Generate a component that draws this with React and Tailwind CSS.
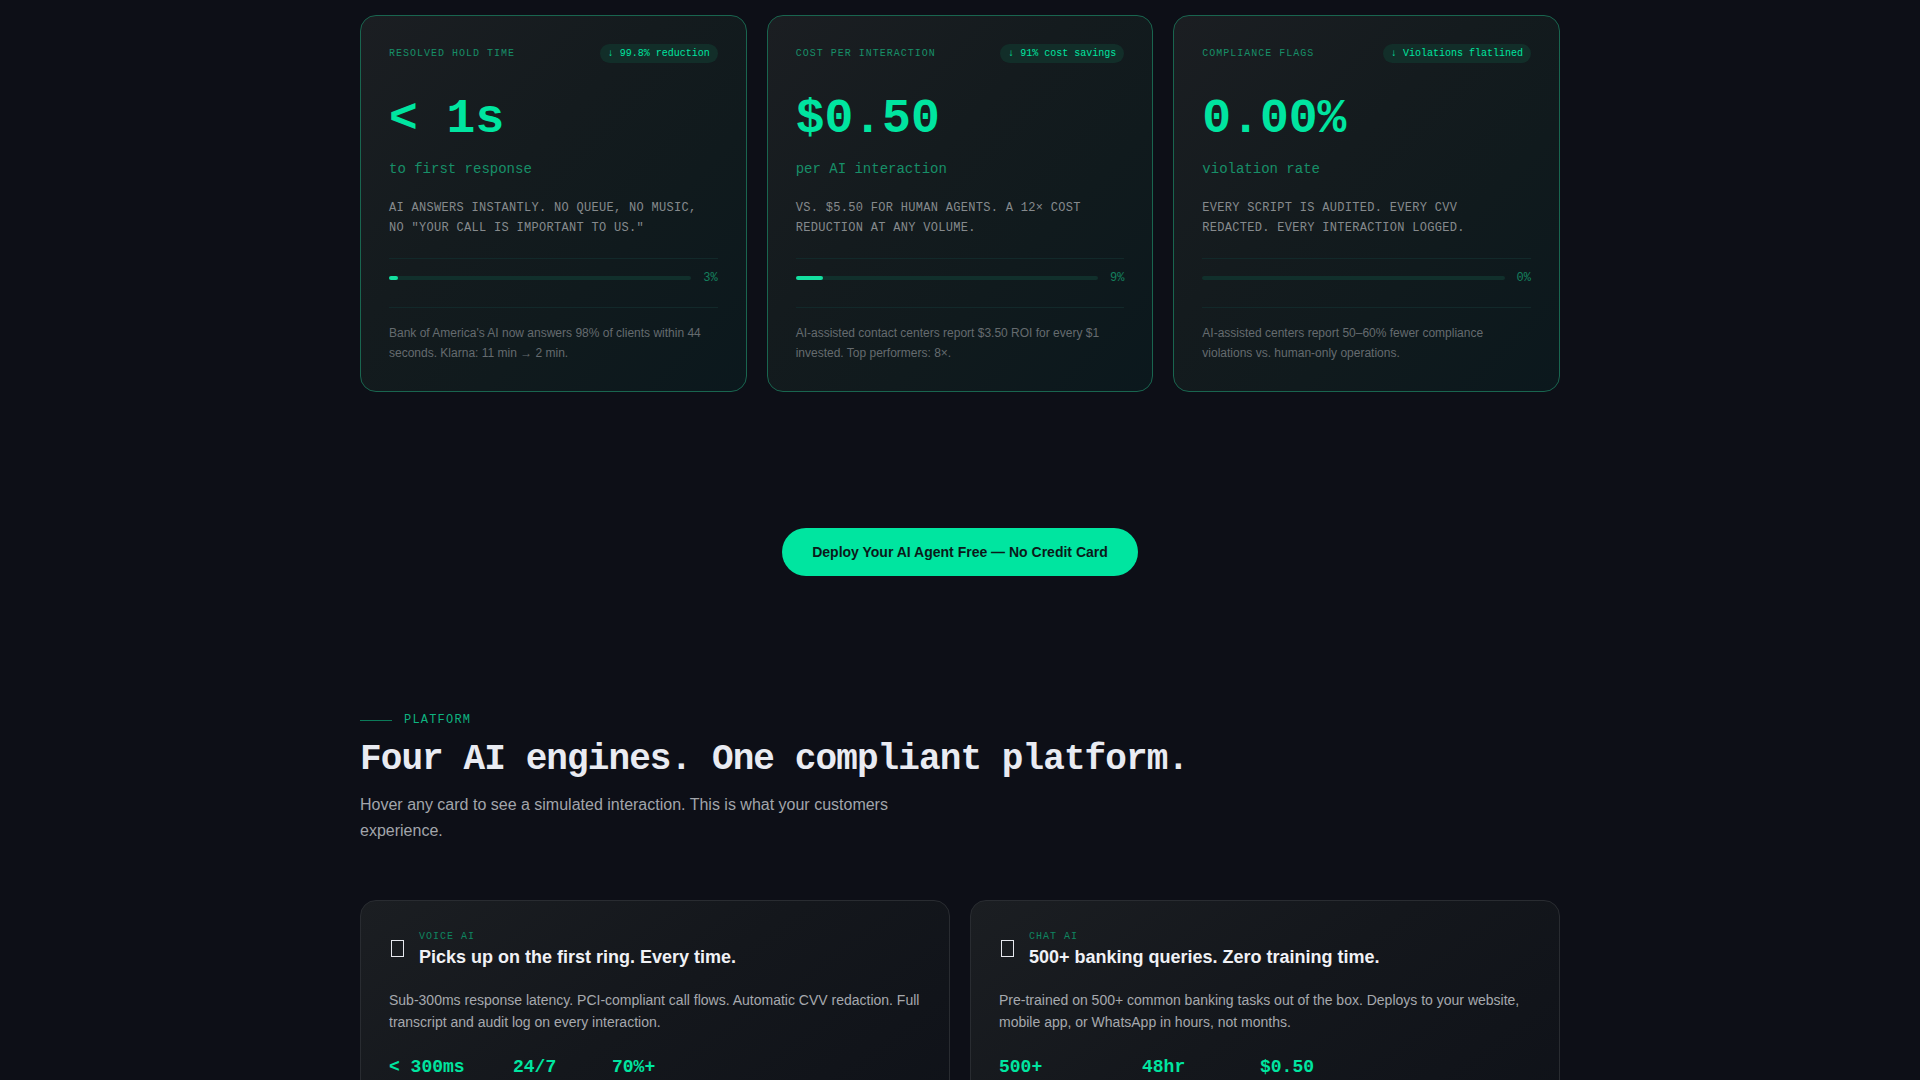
const SANS = 'font-["Liberation_Sans",Arial,sans-serif]';
const MONO = 'font-["Liberation_Mono","Courier_New",monospace]';

const metrics = [
  {
    label: "Resolved hold time",
    badge: "↓ 99.8% reduction",
    value: "< 1s",
    unit: "to first response",
    text: "AI answers instantly. No queue, no music, no \"your call is important to us.\"",
    percent: 3,
    note: "Bank of America's AI now answers 98% of clients within 44 seconds. Klarna: 11 min → 2 min.",
  },
  {
    label: "Cost per interaction",
    badge: "↓ 91% cost savings",
    value: "$0.50",
    unit: "per AI interaction",
    text: "vs. $5.50 for human agents. A 12× cost reduction at any volume.",
    percent: 9,
    note: "AI-assisted contact centers report $3.50 ROI for every $1 invested. Top performers: 8×.",
  },
  {
    label: "Compliance flags",
    badge: "↓ Violations flatlined",
    value: "0.00%",
    unit: "violation rate",
    text: "Every script is audited. Every CVV redacted. Every interaction logged.",
    percent: 0,
    note: "AI-assisted centers report 50–60% fewer compliance violations vs. human-only operations.",
  },
];

const engines = [
  {
    label: "Voice AI",
    title: "Picks up on the first ring. Every time.",
    text: "Sub-300ms response latency. PCI-compliant call flows. Automatic CVV redaction. Full transcript and audit log on every interaction.",
    stats: ["< 300ms", "24/7", "70%+"],
    columns: "grid-cols-[124px_99px_auto]",
  },
  {
    label: "Chat AI",
    title: "500+ banking queries. Zero training time.",
    text: "Pre-trained on 500+ common banking tasks out of the box. Deploys to your website, mobile app, or WhatsApp in hours, not months.",
    stats: ["500+", "48hr", "$0.50"],
    columns: "grid-cols-[143px_118px_auto]",
  },
];

function MetricCard({ metric }) {
  return (
    <article className="rounded-2xl border border-[#19654f] bg-[linear-gradient(135deg,#1b1e22_0%,#141b1e_40%,#101a1d_65%,#0b181d_100%)] p-7">
      <div className={`${MONO} flex items-center justify-between text-[10px] leading-[15px]`}>
        <h3 className="uppercase tracking-widest text-[#178f68]">{metric.label}</h3>
        <span className="rounded-full bg-[#122e29] px-2 py-0.5 text-[#00e5a0]">{metric.badge}</span>
      </div>
      <p className={`${MONO} mt-8 text-5xl font-bold text-[#00e5a0]`}>{metric.value}</p>
      <p className={`${MONO} mt-3.5 text-sm leading-6 text-[#178f68]`}>{metric.unit}</p>
      <p className={`${MONO} mt-[17px] text-xs leading-5 uppercase tracking-wide text-[#868a8d]`}>{metric.text}</p>
      <div className="mt-5 flex items-center gap-3 border-y border-[#12292a] pt-2.5 pb-5">
        <div className="h-1 flex-1 rounded-full bg-[#11302c]">
          <div className="h-1 rounded-full bg-[#14e0a0]" style={{ width: `${metric.percent}%` }} />
        </div>
        <span className={`${MONO} text-xs leading-[18px] text-[#15805e]`}>{metric.percent}%</span>
      </div>
      <p className="mt-[15px] text-xs leading-5 text-[#656b6f]">{metric.note}</p>
    </article>
  );
}

function EngineCard({ engine }) {
  return (
    <article className="rounded-2xl border border-[#292c31] bg-[linear-gradient(145deg,#1b1e22_0%,#14171c_45%,#0e1118_100%)] px-7 pt-7 pb-24">
      <div className="flex items-center gap-3">
        <svg className="h-[18px] w-[18px]" viewBox="0 0 18 18" fill="none" stroke="#e6e8ee" aria-hidden="true">
          <rect x="2.5" y="0.5" width="12" height="16" />
        </svg>
        <div>
          <p className={`${MONO} text-[10px] leading-4 uppercase tracking-widest text-[#0f8560]`}>{engine.label}</p>
          <h3 className="text-lg leading-6 font-bold text-[#f0f1f5]">{engine.title}</h3>
        </div>
      </div>
      <p className="mt-5 text-sm leading-[22px] text-[#a6a9ae]">{engine.text}</p>
      <div className={`${MONO} ${engine.columns} mt-5 grid text-lg font-bold text-[#00e5a0]`}>
        {engine.stats.map((stat) => (
          <span key={stat}>{stat}</span>
        ))}
      </div>
    </article>
  );
}

export default function App() {
  return (
    <main className={`${SANS} h-screen overflow-hidden bg-[#0d0f17] px-6 pt-[15px]`}>
      <div className="mx-auto max-w-[1200px]">
        <section className="grid grid-cols-3 gap-5">
          {metrics.map((metric) => (
            <MetricCard key={metric.label} metric={metric} />
          ))}
        </section>

        <div className="mt-34 flex justify-center">
          <a href="#deploy" className="rounded-full bg-[#00e5a0] px-[30px] py-3.5 text-sm font-bold text-[#0b1a1a]">
            Deploy Your AI Agent Free — No Credit Card
          </a>
        </div>

        <section className="mt-[135px]">
          <div className="flex items-center gap-3">
            <span className="h-px w-8 bg-[#0b7a59]" />
            <p className={`${MONO} text-xs leading-[18px] uppercase tracking-widest text-[#0eb380]`}>Platform</p>
          </div>
          <h2 className={`${MONO} mt-[11px] text-4xl font-bold tracking-tight text-[#e9ebf2]`}>
            Four AI engines. One compliant platform.
          </h2>
          <p className="mt-3 max-w-[560px] text-base leading-[26px] text-[#a2a5ab]">
            Hover any card to see a simulated interaction. This is what your customers experience.
          </p>
          <div className="mt-14 grid grid-cols-2 gap-5">
            {engines.map((engine) => (
              <EngineCard key={engine.label} engine={engine} />
            ))}
          </div>
        </section>
      </div>
    </main>
  );
}
